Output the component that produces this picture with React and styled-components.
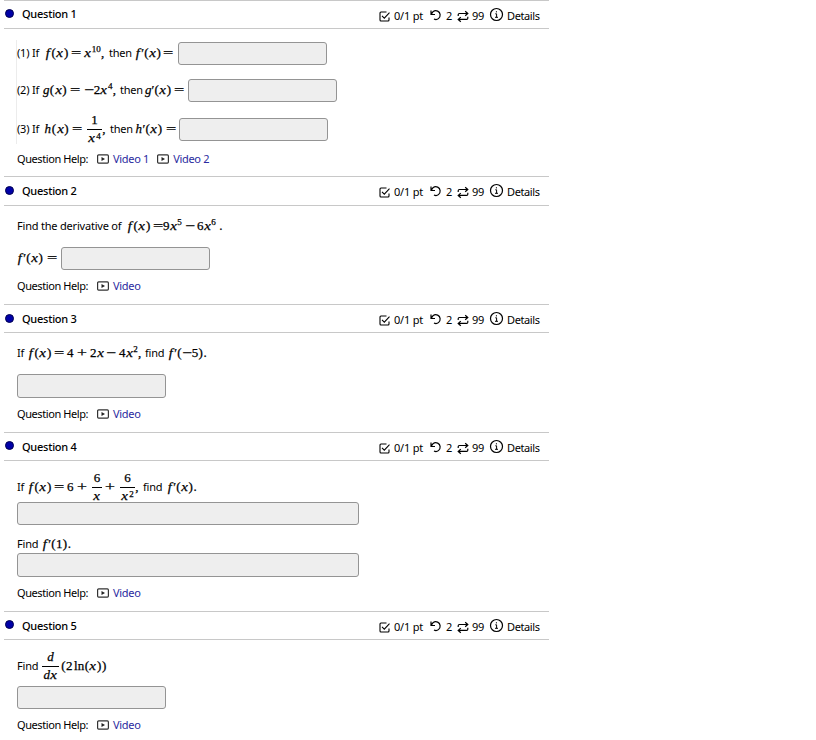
import React from "react";
import styled, { createGlobalStyle } from "styled-components";

const Global = createGlobalStyle`
  body { margin: 0; background: #fff; color: #000; font: 11px/16px "Noto Sans", sans-serif; }
  * { box-sizing: border-box; }
`;

const Page = styled.main`
  width: 549px;
  height: 740px;
  padding-left: 4px;
  overflow: hidden;
`;
const Section = styled.section`
  height: ${(p) => p.$h}px;
  display: flex;
  flex-direction: column;
`;
const Header = styled.header`
  height: ${(p) => p.$h}px;
  flex: none;
  display: flex;
  align-items: flex-start;
  border-top: 1px solid #c8c8c8;
  border-bottom: 1px solid #c8c8c8;
`;
const Dot = styled.span`
  flex: none;
  width: 9px;
  height: 9px;
  margin: ${(p) => p.$top}px 8px 0 1px;
  border-radius: 50%;
  background: #0000a8;
  border: 1px solid #000050;
`;
const Title = styled.h2`
  margin: ${(p) => p.$top}px 0 0;
  width: 358px;
  font-size: 11px;
  line-height: 16px;
  font-weight: 500;
  letter-spacing: -0.25px;
`;
const Meta = styled.div`
  display: flex;
  padding-top: ${(p) => p.$top}px;
`;
const Body = styled.div`
  margin-left: 12px;
  padding-left: 1px;
  display: flex;
  flex-direction: column;
  align-items: flex-start;
`;
const Parts = styled.div`
  height: 104px;
  margin: 11px 0 0 -1px;
  border-left: 1px solid #ececec;
`;
const Row = styled.div`
  display: flex;
  align-items: center;
  height: ${(p) => p.$h || 23}px;
  margin-top: ${(p) => p.$mt || 0}px;
  white-space: nowrap;
`;
const Text = styled.span`
  flex: none;
  width: ${(p) => p.$w}px;
  letter-spacing: ${(p) => p.$ls ?? -0.2}px;
  white-space: pre;
`;
const Phrase = styled(Text)`
  padding-bottom: 1px;
`;
const MathRun = styled.span`
  flex: none;
  width: ${(p) => p.$w}px;
  padding-bottom: 1px;
  text-indent: -1px;
  font: 13px/16px "Liberation Serif", serif;
  -webkit-text-stroke: 0.25px #000;
  white-space: nowrap;
`;
const Glyph = styled.span`
  display: inline-block;
  width: ${(p) => p.$w}em;
  text-align: center;
  text-indent: 0;
  font-style: ${(p) => (p.$italic ? "italic" : "normal")};
  transform: scaleX(${(p) => p.$sx || 1});
`;
const Sup = styled.span`
  display: inline-block;
  margin-left: 0.5px;
  text-indent: 0;
  font-size: 9px;
  line-height: 8px;
  transform: translateY(-5px);
`;
const Fraction = styled.span`
  flex: none;
  display: flex;
  flex-direction: column;
  align-items: center;
  width: ${(p) => p.$w}px;
  margin-right: ${(p) => p.$gap}px;
  font: 13px/16px "Liberation Serif", serif;
  -webkit-text-stroke: 0.25px #000;
`;
const Num = styled.span`
  height: 17px;
  width: 100%;
  line-height: 14px;
  text-align: center;
  border-bottom: 1px solid #000;
`;
const Den = styled.span`
  height: 16px;
  white-space: nowrap;
`;
const DenSup = styled(Sup)`
  transform: translateY(-3px);
`;
const Field = styled.input`
  display: block;
  flex: none;
  width: ${(p) => p.$w || 149}px;
  height: ${(p) => p.$h || 23}px;
  margin: ${(p) => p.$mt || 0}px 0 0;
  padding: 2px 5px;
  border: 1px solid #949494;
  border-radius: 3px;
  background: #eee;
`;
const Link = styled.a`
  display: flex;
  align-items: center;
  gap: 4px;
  margin-right: 8px;
  color: #2a2aa0;
  letter-spacing: -0.3px;
`;
const Icon = styled.svg`
  flex: none;
  width: ${(p) => p.$w}px;
  height: ${(p) => p.$h}px;
  margin: ${(p) => p.$m || 0};
  fill: none;
  stroke: currentColor;
  overflow: visible;
`;

const widths = { f: 0.56, g: 0.5, h: 0.576, d: 0.52, x: 0.56, "(": 0.389, ")": 0.389, "=": 0.778, "+": 0.778, "−": 0.75, ",": 0.278, ".": 0.278, "′": 0.2, n: 0.52, l: 0.278 };
const stretch = { x: 1.15, "=": 1.4, "+": 1.35, "−": 1.35, f: 1.1 };

function Glyphs({ s }) {
  return [...s].map((c, i) => (
    <Glyph key={i} $w={widths[c] || 0.5} $italic={"fghdx".includes(c)} $sx={stretch[c]}>
      {c}
    </Glyph>
  ));
}
const M = ({ w, s, sup, end }) => (
  <MathRun $w={w}>
    <Glyphs s={s} />
    {sup && <Sup>{sup}</Sup>}
    {end && <Glyphs s={end} />}
  </MathRun>
);
const Frac = ({ w, gap, n, d, sup }) => (
  <Fraction $w={w} $gap={gap}>
    <Num><Glyphs s={n} /></Num>
    <Den><Glyphs s={d} />{sup && <DenSup>{sup}</DenSup>}</Den>
  </Fraction>
);

function Help({ mt, links = ["Video"] }) {
  return (
    <Row $h={16} $mt={mt}>
      <Text $w={80} $ls={-0.42}>Question Help:</Text>
      {links.map((l) => (
        <Link key={l}>
          <Icon $w={12} $h={10} viewBox="0 0 12 10" color="#333">
            <rect x=".6" y=".9" width="10.8" height="8.2" rx="1" strokeWidth="1.2" />
            <path d="M4.5 3v4L8 5z" fill="#222" stroke="none" />
          </Icon>
          <span>{l}</span>
        </Link>
      ))}
    </Row>
  );
}

function Question({ n, h, children }) {
  const shift = n > 2 ? 1 : 0;
  return (
    <Section $h={h}>
      <Header $h={n === 2 ? 30 : 29}>
        <Dot $top={n === 2 ? 9 : 8 + (n === 3 ? 1 : 0)} />
        <Title $top={n === 2 ? 6 : 5 + shift}>Question {n}</Title>
        <Meta $top={7}>
          <Icon $w={11} $h={11} $m="3px 4px 0 -1px" viewBox="0 0 11 11">
            <path d="M7.5 1H2Q1 1 1 2v7q0 1 1 1h7q1 0 1-1V6.5M3 4.8l2.3 2.3L10.5 1.7" strokeWidth="1.1" />
          </Icon>
          <Text $w={36}>0/1 pt</Text>
          <Icon $w={11} $h={11} $m="2px 5px 0 0" viewBox="0 0 11 11">
            <path d="M1 .5v4h4M1.2 4.5C2.5 1.8 5-.1 7.7 1.1c3 1.4 3.2 5.6.8 7.5-1.4 1.1-3.1 1.2-4.5.4" strokeWidth="1.2" />
          </Icon>
          <Text $w={11}>2</Text>
          <Icon $w={12} $h={11} $m="3px 3px 0 0" viewBox="0 0 12 11">
            <path d="M1.2 5V3.7Q1.2 2.5 2.4 2.5h7.8M8.2.2l2.6 2.3-2.6 2.3M10.8 5.8v1.4q0 1.2-1.2 1.2H1.8M3.8 6.1L1.2 8.4l2.6 2.4" strokeWidth="1.2" />
          </Icon>
          <Text $w={19}>99</Text>
          <Icon $w={13} $h={13} $m="0 4px 0 -1px" viewBox="0 0 13 13">
            <circle cx="6.5" cy="6.5" r="6" strokeWidth="1.2" />
            <path d="M5.3 5.8h1.3v3.5M5 9.3h3M6.4 3.2v1.2" strokeWidth="1" />
          </Icon>
          <Text $w={34} $ls={-0.4}>Details</Text>
        </Meta>
      </Header>
      <Body>{children}</Body>
    </Section>
  );
}

export default function App() {
  return (
    <>
      <Global />
      <Page>
        <Question n={1} h={176}>
          <Parts>
            <Row $mt={2}>
              <Phrase $w={28}>(1) If</Phrase>
              <M w={27} s="f(x)" /><M w={13} s="=" /><M w={24} s="x" sup="10" end="," />
              <Phrase $w={26}>then</Phrase>
              <M w={29} s="f′(x)" /><M w={14} s="=" /><Field />
            </Row>
            <Row $mt={14}>
              <Phrase $w={27}>(2) If</Phrase>
              <M w={27} s="g(x)" /><M w={14} s="=" /><M w={35} s="−2x" sup="4" end="," />
              <Phrase $w={26}>then</Phrase>
              <M w={29} s="g′(x)" /><M w={13} s="=" /><Field />
            </Row>
            <Row $mt={16}>
              <Phrase $w={28}>(3) If</Phrase>
              <M w={28} s="h(x)" /><M w={14} s="=" /><Frac w={15} gap={1} n="1" d="x" sup="4" />
              <M w={7} s="," /><Phrase $w={26}>then</Phrase>
              <M w={31} s="h′(x)" /><M w={12} s="=" /><Field />
            </Row>
          </Parts>
          <Help mt={7} links={["Video 1", "Video 2"]} />
        </Question>
        <Question n={2} h={128}>
          <Row $mt={9}>
            <Phrase $w={110}>Find the derivative of</Phrase>
            <M w={27} s="f(x)" /><M w={10} s="=" /><M w={22} s="9x" sup="5" />
            <M w={12} s="−" /><M w={22} s="6x" sup="6" /><M w={5} s="." />
          </Row>
          <Row $mt={9}><M w={31} s="f′(x)" /><M w={13} s="=" /><Field /></Row>
          <Help mt={8} />
        </Question>
        <Question n={3} h={128}>
          <Row $mt={9}>
            <Phrase $w={11}>If</Phrase>
            <M w={27} s="f(x)" /><M w={13} s="=" /><M w={10} s="4" /><M w={13} s="+" />
            <M w={16} s="2x" /><M w={13} s="−" /><M w={25} s="4x" sup="2" end="," />
            <Phrase $w={23}>find</Phrase><M w={42} s="f′(−5)." />
          </Row>
          <Field $h={24} $mt={9} />
          <Help mt={8} />
        </Question>
        <Question n={4} h={179}>
          <Row $mt={15}>
            <Phrase $w={11}>If</Phrase>
            <M w={27} s="f(x)" /><M w={13} s="=" /><M w={10} s="6" /><M w={14} s="+" />
            <Frac w={10} gap={4} n="6" d="x" /><M w={14} s="+" /><Frac w={15} gap={1} n="6" d="x" sup="2" />
            <M w={7} s="," /><Phrase $w={24}>find</Phrase><M w={30} s="f′(x)." />
          </Row>
          <Field $w={342} $mt={3} />
          <Row $h={16} $mt={11}><Text $w={25}>Find</Text><M w={30} s="f′(1)." /></Row>
          <Field $w={342} $h={24} $mt={1} />
          <Help mt={8} />
        </Question>
        <Question n={5} h={129}>
          <Row $mt={15}>
            <Phrase $w={25}>Find</Phrase><Frac w={17} gap={3} n="d" d="dx" />
            <M w={13} s="(2" /><M w={35} s="ln(x))" />
          </Row>
          <Field $mt={8} />
          <Help mt={8} />
        </Question>
      </Page>
    </>
  );
}
